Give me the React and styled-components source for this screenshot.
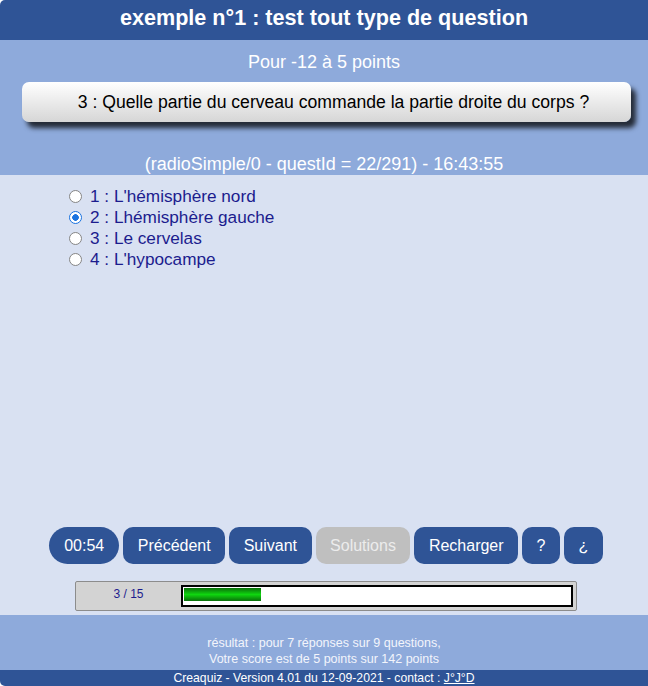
import React from "react";
import styled, { createGlobalStyle } from "styled-components";

const Global = createGlobalStyle`
  html, body { margin: 0; padding: 0; background: #ffffff; }
  body { font-family: "Liberation Sans", Arial, sans-serif; }
`;

const Page = styled.div`
  width: 648px;
  height: 686px;
  display: flex;
  flex-direction: column;
  border-radius: 5px 0 0 5px;
  overflow: hidden;
`;

const Header = styled.header`
  height: 40px;
  background: #2f5496;
  color: #ffffff;
  font-weight: bold;
  font-size: 21.6px;
  display: flex;
  align-items: center;
  justify-content: center;
  padding-bottom: 4px;
  box-sizing: border-box;
`;

const Intro = styled.section`
  height: 135px;
  background: #8eaadb;
  display: flex;
  flex-direction: column;
  box-sizing: border-box;
  padding-top: 12px;
`;

const CenterLine = styled.div`
  color: #ffffff;
  font-size: 18px;
  line-height: 20px;
  text-align: center;
  margin-top: ${(p) => p.$top || 0}px;
`;

const QuestionBox = styled.div`
  margin: 10px 17px 0 22px;
  height: 40px;
  border-radius: 7px;
  background: linear-gradient(#ffffff, #d6d6d6);
  box-shadow: 5px 6px 5px rgba(0, 0, 0, 0.75);
  display: flex;
  align-items: center;
  justify-content: center;
  padding-left: 14px;
  color: #000000;
  font-size: 17.6px;
`;

const Content = styled.main`
  height: 440px;
  background: #d9e1f2;
  display: flex;
  flex-direction: column;
  box-sizing: border-box;
  padding-top: 11px;
`;

const Options = styled.div`
  display: flex;
  flex-direction: column;
  margin-left: 69px;
`;

const Option = styled.label`
  display: flex;
  align-items: center;
  height: 21px;
  color: #1c1c8e;
  font-size: 17.2px;
`;

const Radio = styled.input`
  appearance: none;
  margin: 0 8px 0 0;
  width: 13px;
  height: 13px;
  box-sizing: border-box;
  border-radius: 50%;
  border: 1.6px solid #858585;
  background: #ffffff;
  &:checked {
    border-color: #1a73e0;
    background: radial-gradient(circle, #1a73e0 0 3px, #ffffff 3.6px);
  }
`;

const Spacer = styled.div`
  flex: 1;
`;

const Buttons = styled.div`
  display: flex;
  justify-content: center;
  gap: 4px;
  padding-left: 4px;
`;

const Btn = styled.button`
  height: 37px;
  border: none;
  padding: 0 ${(p) => (p.$pill ? 15 : 14.5)}px;
  border-radius: ${(p) => (p.$pill ? "18.5px" : "10px")};
  background: ${(p) => (p.$off ? "#bfbfbf" : "#2f5496")};
  color: ${(p) => (p.$off ? "#ececec" : "#ffffff")};
  font-family: "Liberation Sans", Arial, sans-serif;
  font-size: 16px;
  cursor: pointer;
`;

const Progress = styled.div`
  margin: 17px 0 4px 75px;
  width: 502px;
  height: 30px;
  box-sizing: border-box;
  background: #d3d3d3;
  border: 1px solid #8c8c8c;
  border-radius: 2px;
  display: flex;
  align-items: center;
`;

const ProgressLabel = styled.div`
  width: 105px;
  text-align: center;
  color: #1c1c8e;
  font-size: 12px;
  margin-top: -4px;
`;

const Track = styled.div`
  width: 392px;
  height: 22px;
  box-sizing: border-box;
  background: #ffffff;
  border: 2px solid #000000;
  padding: 1px 0 4px 1px;
  margin-top: -1px;
`;

const Fill = styled.div`
  height: 100%;
  background: linear-gradient(#0a6e0a, #0fd60f 50%, #0a6e0a);
`;

const Result = styled.section`
  height: 55px;
  background: #8eaadb;
  color: #f3f5fb;
  font-size: 12.5px;
  line-height: 16px;
  text-align: center;
  box-sizing: border-box;
  padding-top: 20px;
`;

const Footer = styled.footer`
  height: 16px;
  background: #2f5496;
  color: #ffffff;
  font-size: 12.2px;
  line-height: 16px;
  text-align: center;
  a {
    color: #ffffff;
    text-decoration: underline;
  }
`;

const options = [
  "1 : L'hémisphère nord",
  "2 : Lhémisphère gauche",
  "3 : Le cervelas",
  "4 : L'hypocampe",
];

export default function App() {
  const done = 3;
  const total = 15;
  return (
    <>
      <Global />
      <Page>
        <Header>exemple n°1 : test tout type de question</Header>
        <Intro>
          <CenterLine>Pour -12 à 5 points</CenterLine>
          <QuestionBox>3 : Quelle partie du cerveau commande la partie droite du corps ?</QuestionBox>
          <CenterLine $top={32}>(radioSimple/0 - questId = 22/291) - 16:43:55</CenterLine>
        </Intro>
        <Content>
          <Options>
            {options.map((o, i) => (
              <Option key={i}>
                <Radio type="radio" name="q" defaultChecked={i === 1} />
                {o}
              </Option>
            ))}
          </Options>
          <Spacer />
          <Buttons>
            <Btn $pill>00:54</Btn>
            <Btn>Précédent</Btn>
            <Btn>Suivant</Btn>
            <Btn $off>Solutions</Btn>
            <Btn>Recharger</Btn>
            <Btn>?</Btn>
            <Btn>¿</Btn>
          </Buttons>
          <Progress>
            <ProgressLabel>
              {done} / {total}
            </ProgressLabel>
            <Track>
              <Fill style={{ width: `${(done / total) * 100}%` }} />
            </Track>
          </Progress>
        </Content>
        <Result>
          résultat : pour 7 réponses sur 9 questions,
          <br />
          Votre score est de 5 points sur 142 points
        </Result>
        <Footer>
          Creaquiz - Version 4.01 du 12-09-2021 - contact : <a href="#">J°J°D</a>
        </Footer>
      </Page>
    </>
  );
}
